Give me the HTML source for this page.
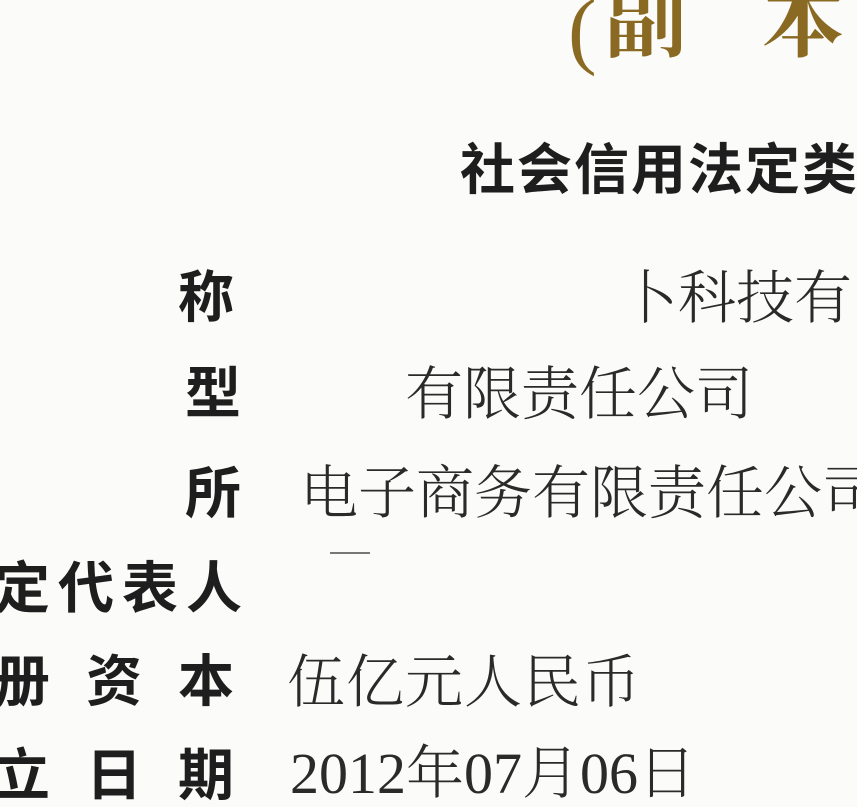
<!DOCTYPE html>
<html><head><meta charset="utf-8"><style>
html,body{margin:0;padding:0}
body{width:857px;height:793px;overflow:hidden;background:#fbfbf9;position:relative}
.t{position:absolute;white-space:nowrap;line-height:1}
.b{font-family:"Liberation Sans","Noto Sans CJK SC",sans-serif;font-weight:bold;color:#1e1e1e;font-size:56px}
.s{font-family:"Liberation Serif","Noto Serif CJK SC",serif;color:#2a2a2a;font-size:58px;font-weight:300}
.g{font-family:"Liberation Serif","Noto Serif CJK SC",serif;color:#8a6a22;font-size:82px;font-weight:bold}
</style></head><body>
<div class="t g" style="left:568px;top:-14px;font-weight:normal;font-size:86px">(</div>
<div class="t g" style="left:605px;top:-18px">副</div>
<div class="t g" style="left:762px;top:-18px">本</div>
<div class="t b" style="left:460px;top:143px;font-size:55px;letter-spacing:2px">社会信用法定类</div>
<div class="t b" style="left:178px;top:270px">称</div>
<div class="t b" style="left:185px;top:366px">型</div>
<div class="t b" style="left:185px;top:466px">所</div>
<div class="t b" style="left:-6px;top:561px;letter-spacing:8px">定代表人</div>
<div class="t b" style="left:-6px;top:654px;letter-spacing:36px">册资本</div>
<div class="t b" style="left:-6px;top:748px;letter-spacing:36px">立日期</div>
<div class="t s" style="left:620px;top:270px">卜科技有限</div>
<div class="t s" style="left:405px;top:366px">有限责任公司</div>
<div class="t s" style="left:300px;top:465px">电子商务有限责任公司</div>
<div class="t s" style="left:287px;top:654px;letter-spacing:1px">伍亿元人民币</div>
<div class="t s" style="left:290px;top:745px">2012年07月06日</div>
<div class="t" style="left:330px;top:552px;width:40px;height:2px;background:#777"></div>
</body></html>
